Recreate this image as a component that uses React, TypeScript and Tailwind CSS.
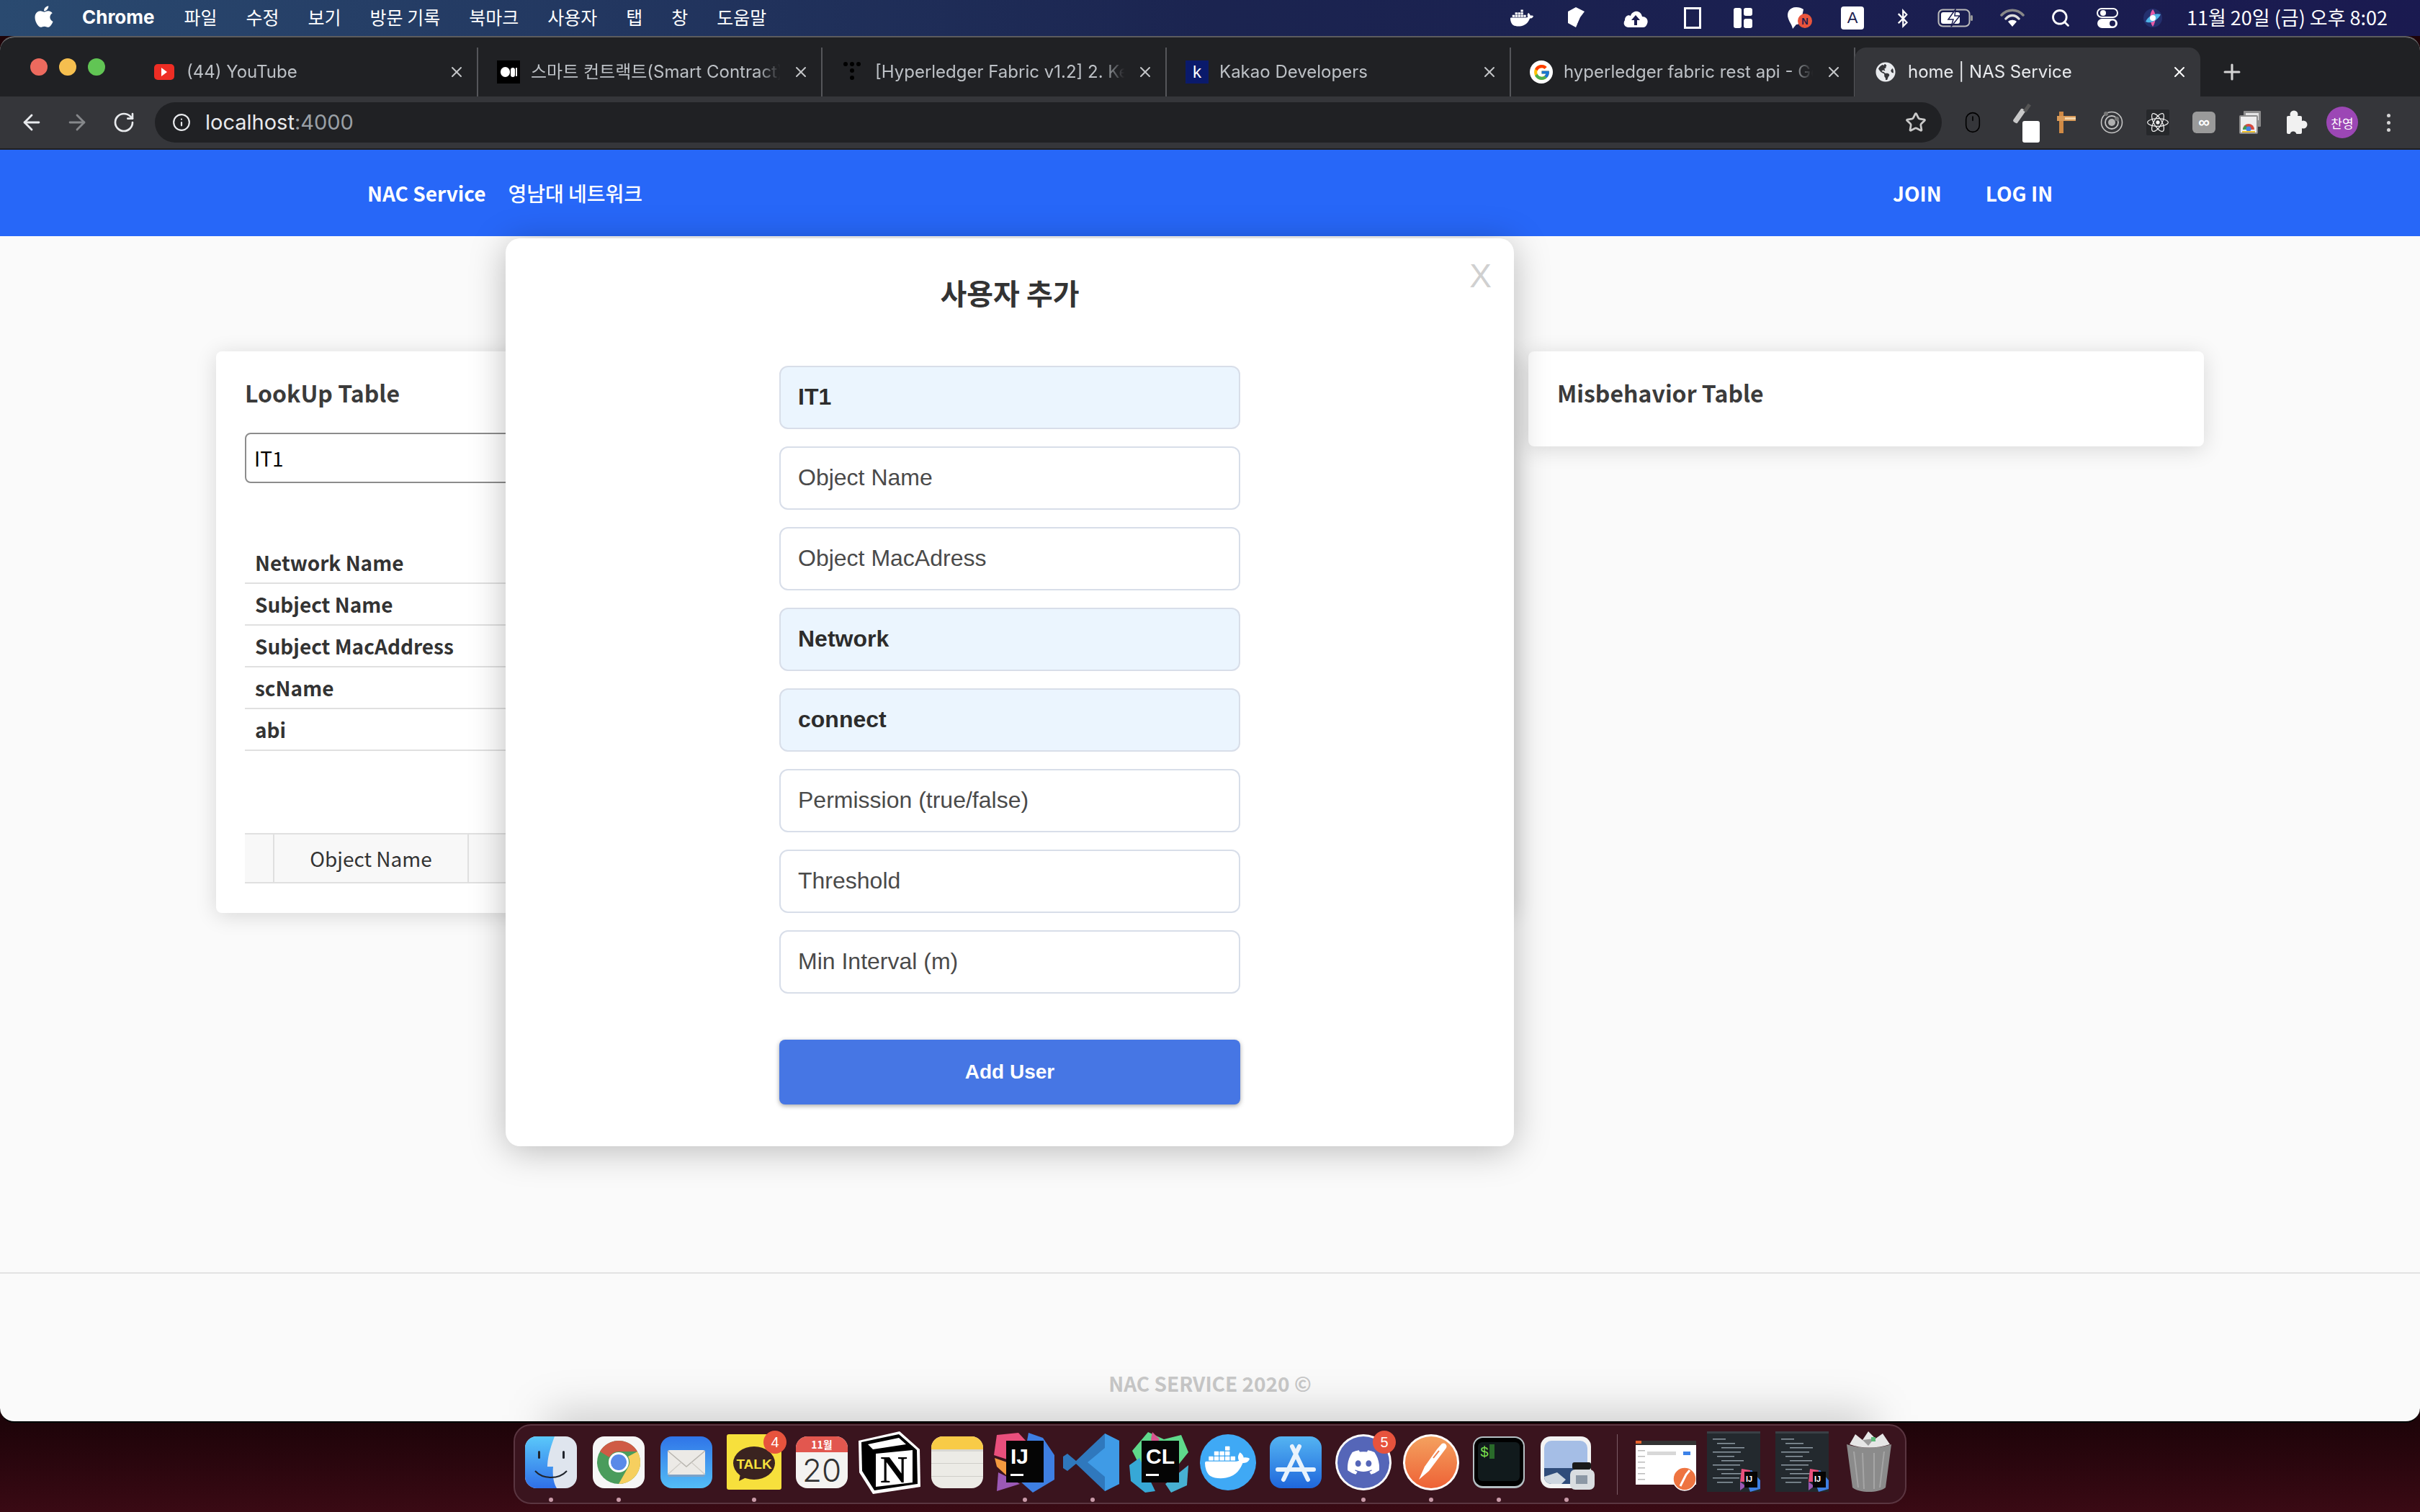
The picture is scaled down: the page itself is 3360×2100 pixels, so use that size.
import { ReactNode } from "react";
import { ArrowLeft, ArrowRight, Info, Mouse, Plus, RotateCw, Search, Star, X } from "lucide-react";
import { FaApple, FaBluetoothB, FaDiscord, FaGlobeAmericas, FaReact } from "react-icons/fa";
import { FcGoogle } from "react-icons/fc";
import { SiDocker } from "react-icons/si";

const menuItems = ["파일", "수정", "보기", "방문 기록", "북마크", "사용자", "탭", "창", "도움말"];

const tabs: { title: string; icon: ReactNode; active?: boolean }[] = [
  {
    title: "(44) YouTube",
    icon: (
      <span className="flex h-[22px] w-[28px] items-center justify-center rounded-[5px] bg-[#ee2d24]">
        <span className="h-0 w-0 border-y-[6px] border-l-[8px] border-y-transparent border-l-white" />
      </span>
    ),
  },
  {
    title: "스마트 컨트랙트(Smart Contract)란?",
    icon: (
      <span className="flex h-[32px] w-[32px] items-center justify-center gap-[1px] bg-black">
        <span className="h-[14px] w-[13px] rounded-full bg-white" />
        <span className="h-[13px] w-[6px] rounded-full bg-white" />
        <span className="h-[12px] w-[2px] rounded-full bg-white" />
      </span>
    ),
  },
  {
    title: "[Hyperledger Fabric v1.2] 2. Key Concepts",
    icon: (
      <svg width="32" height="32" viewBox="0 0 32 32" fill="#000">
        <circle cx="6" cy="5" r="3" />
        <circle cx="15" cy="5" r="3" />
        <circle cx="24" cy="5" r="3" />
        <circle cx="15" cy="14" r="3" />
        <circle cx="15" cy="24" r="3" />
      </svg>
    ),
  },
  {
    title: "Kakao Developers",
    icon: (
      <span className="flex h-[32px] w-[32px] items-center justify-center bg-[#0a1a6b] font-['Liberation_Sans',sans-serif] text-[24px] leading-none text-white">
        k
      </span>
    ),
  },
  {
    title: "hyperledger fabric rest api - Google 검색",
    icon: (
      <span className="flex h-[32px] w-[32px] items-center justify-center rounded-full bg-white">
        <FcGoogle size={25} />
      </span>
    ),
  },
  {
    title: "home | NAS Service",
    active: true,
    icon: <FaGlobeAmericas size={28} className="text-[#e8eaed]" />,
  },
];

const lookupRows = ["Network Name", "Subject Name", "Subject MacAddress", "scName", "abi"];

const formFields = [
  { value: "IT1" },
  { placeholder: "Object Name" },
  { placeholder: "Object MacAdress" },
  { value: "Network" },
  { value: "connect" },
  { placeholder: "Permission (true/false)" },
  { placeholder: "Threshold" },
  { placeholder: "Min Interval (m)" },
];

const MenuStatusIcons = () => (
  <div className="absolute inset-y-0 left-[2095px] flex items-center text-white">
    <span className="flex w-[35px] justify-center">
      <SiDocker size={32} />
    </span>
    <svg className="ml-[44px]" width="28" height="30" viewBox="0 0 28 30" fill="#fff">
      <path d="M14 0 L26 6 L20 14 L14 28 L3 22 V6 Z" />
      <path d="M22 14 L17 24" stroke="#1b1d50" strokeWidth="2" />
    </svg>
    <svg className="ml-[51px]" width="36" height="30" viewBox="0 0 36 30" fill="#fff">
      <path d="M9 28 C2 28 0 22 3 18 C3 12 8 10 11 12 C13 4 25 3 27 13 C33 13 36 18 34 23 C33 26 31 28 28 28 Z" />
      <path d="M18 11 L12 18 H16 V25 H20 V18 H24 Z" fill="#1b1d50" />
    </svg>
    <span className="ml-[49px] h-[30px] w-[24px] border-[3px] border-white" />
    <svg className="ml-[45px]" width="26" height="28" viewBox="0 0 26 28" fill="#fff">
      <rect x="0" y="0" width="11" height="28" rx="3" />
      <rect x="14" y="0" width="12" height="11" rx="3" />
      <rect x="14" y="15" width="12" height="13" rx="3" />
    </svg>
    <svg className="ml-[47px]" width="38" height="34" viewBox="0 0 38 34">
      <path d="M14 2 C4 2 0 10 3 18 C5 24 8 26 9 32 L14 26 C17 26 20 24 21 20 L24 5 C21 3 18 2 14 2 Z" fill="#fff" />
      <circle cx="26" cy="21" r="10" fill="#e9553c" />
      <text x="26" y="26" textAnchor="middle" fontSize="13" fontWeight="700" fill="#1b1d50" fontFamily="Liberation Sans, sans-serif">
        N
      </text>
    </svg>
    <span className="ml-[38px] flex h-[32px] w-[32px] items-center justify-center rounded-[4px] bg-white font-['Liberation_Sans',sans-serif] text-[22px] leading-none text-[#1b1d50]">
      A
    </span>
    <span className="ml-[44px] flex w-[20px] justify-center">
      <FaBluetoothB size={27} />
    </span>
    <svg className="ml-[38px]" width="50" height="26" viewBox="0 0 50 26" fill="none">
      <rect x="1.5" y="1.5" width="43" height="23" rx="6" stroke="#bbb" strokeWidth="2" />
      <rect x="5" y="5" width="26" height="16" rx="3" fill="#fff" />
      <rect x="46" y="9" width="3" height="8" rx="1.5" fill="#999" />
      <path d="M25 1 L15 15 H22 L19 25 L31 10 H24 Z" fill="#fff" stroke="#1b1d50" strokeWidth="1.5" />
    </svg>
    <svg className="ml-[37px]" width="34" height="26" viewBox="0 0 34 26" fill="none" strokeLinecap="round">
      <path d="M2 9 C10 0 24 0 32 9" stroke="#888" strokeWidth="3.5" />
      <path d="M8 14 C13 8 21 8 26 14" stroke="#ddd" strokeWidth="3.5" />
      <path d="M17 25 L11 18 C14 15 20 15 23 18 Z" fill="#fff" />
    </svg>
    <Search size={28} strokeWidth={2.4} className="ml-[36px]" />
    <svg className="ml-[36px]" width="30" height="28" viewBox="0 0 30 28">
      <rect x="1" y="1" width="28" height="12" rx="6" fill="none" stroke="#fff" strokeWidth="2" />
      <circle cx="9" cy="7" r="4" fill="#fff" />
      <rect x="1" y="15" width="28" height="13" rx="6.5" fill="#fff" />
      <circle cx="22" cy="21.5" r="4" fill="#1b1d50" />
    </svg>
    <svg className="ml-[35px]" width="26" height="26" viewBox="0 0 26 26">
      <circle cx="13" cy="13" r="13" fill="#24306e" />
      <path d="M13 1 C18 6 18 18 13 25 C8 18 8 6 13 1Z" fill="#e85aa6" />
      <path d="M3 18 C8 8 18 6 24 8 C20 16 10 22 3 18Z" fill="#4fb4e8" />
      <circle cx="13" cy="13" r="4" fill="#fff" />
    </svg>
  </div>
);

const ToolbarIcons = () => (
  <div className="ml-[27px] flex items-center">
    <Mouse size={32} strokeWidth={1.2} className="text-black" />
    <span className="relative ml-[33px] h-[48px] w-[46px]">
      <span className="absolute left-[12px] top-[4px] h-[22px] w-[7px] rotate-[35deg] rounded-[2px] bg-[#c8c8c8]" />
      <span className="absolute left-[24px] top-[-2px] h-[12px] w-[5px] rotate-[35deg] bg-[#555]" />
      <span className="absolute bottom-[-4px] right-[2px] h-[30px] w-[24px] rounded-[3px] bg-white" />
    </span>
    <svg className="ml-[22px]" width="28" height="30" viewBox="0 0 28 30">
      <rect x="3" y="0" width="6" height="30" fill="#d08a45" />
      <rect x="0" y="6" width="26" height="7" fill="#d89a58" />
      <rect x="11" y="8" width="15" height="3" fill="#f4d4a8" />
    </svg>
    <svg className="ml-[32px]" width="32" height="32" viewBox="0 0 32 32" fill="none" stroke="#c4c4c4">
      <circle cx="16" cy="16" r="14.5" strokeWidth="1.6" />
      <circle cx="16" cy="16" r="9" strokeWidth="1.8" />
      <circle cx="16" cy="16" r="5" fill="#b0b0b0" stroke="none" />
      <circle cx="8" cy="4" r="3" fill="#777" stroke="none" />
      <circle cx="23" cy="11" r="3" fill="#777" stroke="none" />
    </svg>
    <span className="ml-[32px] flex h-[36px] w-[32px] items-center justify-center rounded-[2px] bg-[#26282b]">
      <FaReact size={30} className="text-[#efefef]" />
    </span>
    <span className="ml-[32px] flex h-[30px] w-[32px] items-center justify-center rounded-[6px] bg-[#9a9a9a] font-['Liberation_Sans',sans-serif] text-[22px] font-bold leading-none text-white">
      ∞
    </span>
    <svg className="ml-[33px]" width="30" height="32" viewBox="0 0 30 32">
      <rect x="6" y="0" width="24" height="22" rx="1" fill="#8d8d8d" />
      <rect x="9" y="3" width="18" height="10" fill="#e5e5e5" />
      <rect x="0" y="6" width="26" height="26" rx="2" fill="#8d8d8d" />
      <rect x="2" y="8" width="22" height="22" fill="#eee" />
      <path d="M5 26 A8 8 0 0 1 21 26 Z" fill="#d64a3e" />
      <path d="M5 26 A8 8 0 0 1 9 20 L13 26 Z" fill="#3a9d54" />
      <circle cx="13" cy="25" r="3.5" fill="#3f83e8" />
      <rect x="4" y="28" width="18" height="2" fill="#f2c230" />
    </svg>
    <svg className="ml-[35px]" width="30" height="34" viewBox="0 0 30 34" fill="#f1f1f1">
      <rect x="1" y="8" width="21" height="25" rx="2" />
      <circle cx="11" cy="6" r="5.5" />
      <circle cx="24" cy="20" r="5.5" />
      <circle cx="10" cy="34" r="4.5" fill="#35363a" />
    </svg>
    <span className="ml-[26px] flex h-[44px] w-[44px] items-center justify-center rounded-full bg-[#9c47b5] font-['Noto_Sans_CJK_KR',sans-serif] text-[17px] leading-none text-white">
      찬영
    </span>
    <span className="ml-[40px] flex flex-col gap-[5px]">
      <span className="h-[5px] w-[5px] rounded-full bg-[#d5d5d5]" />
      <span className="h-[5px] w-[5px] rounded-full bg-[#d5d5d5]" />
      <span className="h-[5px] w-[5px] rounded-full bg-[#d5d5d5]" />
    </span>
  </div>
);

// dock icons are all drawn on a 94x92 cell, the plain square ones sit at 11,10 72x72
const Cell = ({ children }: { children: ReactNode }) => (
  <svg width="94" height="92" viewBox="0 0 94 92">
    {children}
  </svg>
);

const Badge = ({ n }: { n: string }) => (
  <>
    <circle cx="76" cy="18" r="16" fill="#e7533d" />
    <text x="76" y="25" textAnchor="middle" fontSize="20" fill="#fff" fontFamily="Liberation Sans, sans-serif">
      {n}
    </text>
  </>
);

const FinderIcon = () => (
  <Cell>
    <defs>
      <linearGradient id="finderBg" x1="0" y1="0" x2="0" y2="1">
        <stop offset="0" stopColor="#5ac8fa" />
        <stop offset="1" stopColor="#2f6fe8" />
      </linearGradient>
    </defs>
    <rect x="11" y="10" width="72" height="72" rx="16" fill="#dfe5ee" />
    <path d="M27 10 H52 C46 26 42 40 42 52 H50 C49 62 50 74 55 82 H27 A16 16 0 0 1 11 66 V26 A16 16 0 0 1 27 10 Z" fill="url(#finderBg)" />
    <rect x="29" y="30" width="3" height="11" rx="1.5" fill="#20242c" />
    <rect x="63" y="30" width="3" height="11" rx="1.5" fill="#20242c" />
    <path d="M25 58 C36 70 58 70 69 58" fill="none" stroke="#20242c" strokeWidth="2" />
  </Cell>
);

const ChromeIcon = () => (
  <Cell>
    <rect x="11" y="10" width="72" height="72" rx="16" fill="#f6f6f6" />
    <circle cx="47" cy="46" r="30" fill="#4a9c5c" />
    <path d="M21 31 A30 30 0 0 1 73 31 H47 A15 15 0 0 0 34 39 Z" fill="#cf5b45" />
    <path d="M73 31 A30 30 0 0 1 47 76 L60 53 A15 15 0 0 0 60 38 Z" fill="#f6cf5f" />
    <circle cx="47" cy="46" r="14" fill="#fff" />
    <circle cx="47" cy="46" r="11" fill="#5a8ae8" />
  </Cell>
);

const MailIcon = () => (
  <Cell>
    <defs>
      <linearGradient id="mailBg" x1="0" y1="0" x2="0" y2="1">
        <stop offset="0" stopColor="#2f74e8" />
        <stop offset="1" stopColor="#54bdf6" />
      </linearGradient>
    </defs>
    <rect x="11" y="10" width="72" height="72" rx="16" fill="url(#mailBg)" />
    <rect x="21" y="29" width="52" height="34" rx="3" fill="#eceae6" />
    <path d="M21 30 L47 52 L73 30" fill="none" stroke="#b9b6b0" strokeWidth="1.5" />
    <path d="M21 63 L40 46 M73 63 L54 46" stroke="#cfccc6" strokeWidth="1.2" />
    <rect x="22" y="63" width="50" height="3" fill="#7ea2c6" />
  </Cell>
);

const KakaoIcon = () => (
  <Cell>
    <rect x="9" y="7" width="76" height="77" rx="3" fill="#f7e03c" />
    <ellipse cx="47" cy="47" rx="29" ry="23" fill="#3a2320" />
    <path d="M28 62 L26 72 L38 66 Z" fill="#3a2320" />
    <text x="47" y="55" textAnchor="middle" fontSize="19" fontWeight="700" fill="#f7e03c" fontFamily="Liberation Sans, sans-serif">
      TALK
    </text>
    <Badge n="4" />
  </Cell>
);

const CalendarIcon = () => (
  <Cell>
    <rect x="11" y="10" width="72" height="72" rx="16" fill="#f4f3f1" />
    <path d="M27 10 H67 A16 16 0 0 1 83 26 V32 H11 V26 A16 16 0 0 1 27 10 Z" fill="#e2574f" />
    <text x="47" y="27" textAnchor="middle" fontSize="14" fontWeight="700" fill="#fff" fontFamily="Noto Sans CJK KR, sans-serif">
      11월
    </text>
    <text x="47" y="73" textAnchor="middle" fontSize="44" fill="#333" fontFamily="Inter, sans-serif" fontWeight="300">
      20
    </text>
  </Cell>
);

const NotionIcon = () => (
  <Cell>
    <path d="M4 16 L61 3 L89 28 L90 80 L24 90 L5 60 Z" fill="#fff" />
    <path d="M8 18 L60 7 L85 29 L86 76 L26 85 L9 58 Z" fill="#000" />
    <path d="M17 21 L60 12 L70 21 L24 28 Z" fill="#fff" />
    <path d="M28 34 L79 29 V74 L28 80 Z" fill="#fff" />
    <text x="53" y="74" textAnchor="middle" fontSize="52" fontWeight="700" fill="#000" fontFamily="Liberation Serif, serif">
      N
    </text>
  </Cell>
);

const NotesIcon = () => (
  <Cell>
    <defs>
      <clipPath id="notesClip">
        <rect x="11" y="10" width="72" height="72" rx="16" />
      </clipPath>
    </defs>
    <g clipPath="url(#notesClip)">
      <rect x="11" y="10" width="72" height="72" fill="#ecebe6" />
      <rect x="11" y="10" width="72" height="18" fill="#f8cb47" />
      <rect x="11" y="28" width="72" height="3" fill="#d9d8d3" />
      <rect x="11" y="47" width="72" height="1" fill="#cfcec9" />
      <rect x="11" y="65" width="72" height="1" fill="#cfcec9" />
    </g>
  </Cell>
);

const JetBrainsIcon = ({ label, variant }: { label: string; variant: "ij" | "cl" }) => (
  <Cell>
    {variant === "ij" ? (
      <>
        <path d="M8 8 L38 5 L50 18 L47 50 L4 36 Z" fill="#e94f7c" />
        <path d="M52 5 L72 12 L88 36 L88 70 L58 88 L40 72 Z" fill="#3e7fe3" />
        <path d="M5 40 L28 48 L30 72 L8 52 Z" fill="#f39a3f" />
        <path d="M10 60 L30 70 L40 76 L8 86 Z" fill="#9b59b6" />
      </>
    ) : (
      <>
        <path d="M30 4 L52 14 L76 8 L86 32 L70 52 L18 50 L8 30 Z" fill="#5fd98b" />
        <path d="M36 4 L46 14 L38 24 L34 14 Z" fill="#d9558f" />
        <path d="M4 50 L18 40 L40 86 L26 88 L6 72 Z" fill="#37a8d6" />
        <path d="M54 76 L86 50 L84 78 L62 88 Z" fill="#47b0d2" />
      </>
    )}
    <rect x="21" y="16" width="52" height="58" fill="#050505" />
    <text x="27" y="48" fontSize="30" fontWeight="700" fill="#fff" fontFamily="Liberation Sans, sans-serif">
      {label}
    </text>
    <rect x="27" y="62" width="18" height="3" fill="#fff" />
  </Cell>
);

const VscodeIcon = () => (
  <Cell>
    <path d="M64 6 L84 16 V76 L64 86 L24 48 L12 58 L6 54 V38 L12 34 L24 44 Z" fill="#2f78bd" />
    <path d="M64 6 L84 16 V76 L64 86 Z M64 26 L40 46 L64 66 Z" fill="#3f9be6" fillRule="evenodd" />
  </Cell>
);

const DockerIcon = () => (
  <Cell>
    <circle cx="47" cy="46" r="39" fill="#3fa9f5" />
    <foreignObject x="15" y="15" width="64" height="62">
      <SiDocker size={62} color="#fff" />
    </foreignObject>
  </Cell>
);

const AppStoreIcon = () => (
  <Cell>
    <defs>
      <linearGradient id="appBg" x1="0" y1="0" x2="0" y2="1">
        <stop offset="0" stopColor="#54b4f2" />
        <stop offset="1" stopColor="#1f67dc" />
      </linearGradient>
    </defs>
    <rect x="11" y="10" width="72" height="72" rx="16" fill="url(#appBg)" />
    <path d="M52 24 L30 70 M42 24 L64 70 M22 56 H72" stroke="#e9f3fc" strokeWidth="6" strokeLinecap="round" fill="none" />
  </Cell>
);

const DiscordIcon = () => (
  <Cell>
    <circle cx="47" cy="46" r="39" fill="#fff" />
    <circle cx="47" cy="46" r="36" fill="#5566b8" />
    <foreignObject x="23" y="22" width="48" height="48">
      <FaDiscord size={48} color="#fff" />
    </foreignObject>
    <Badge n="5" />
  </Cell>
);

const PostmanIcon = () => (
  <Cell>
    <defs>
      <linearGradient id="postBg" x1="0" y1="0" x2="0" y2="1">
        <stop offset="0" stopColor="#f4a15f" />
        <stop offset="1" stopColor="#ee6236" />
      </linearGradient>
    </defs>
    <circle cx="47" cy="46" r="39" fill="#fff" />
    <circle cx="47" cy="46" r="36" fill="url(#postBg)" />
    <path d="M30 70 L38 52 L55 28 L62 20 C66 18 70 22 68 26 L62 34 L44 58 Z" fill="#fff" />
    <path d="M50 40 L58 30" stroke="#ef7d4a" strokeWidth="2" />
  </Cell>
);

const TerminalIcon = () => (
  <Cell>
    <rect x="11" y="10" width="72" height="72" rx="14" fill="#b5c0c4" />
    <rect x="13" y="12" width="68" height="67" rx="12" fill="#000" />
    <rect x="18" y="18" width="58" height="54" rx="6" fill="#111a1c" />
    <text x="21" y="38" fontSize="20" fill="#7ce04e" fontFamily="Liberation Mono, monospace">
      $
    </text>
    <rect x="34" y="21" width="7" height="20" fill="#2a6b2a" />
  </Cell>
);

const PreviewIcon = () => (
  <Cell>
    <rect x="11" y="10" width="70" height="72" rx="14" fill="#f3f3f3" />
    <rect x="16" y="16" width="60" height="60" rx="10" fill="#a5bee6" />
    <path d="M16 54 H76 V66 A10 10 0 0 1 66 76 H26 A10 10 0 0 1 16 66 Z" fill="#2f4c7a" />
    <path d="M16 66 L34 60 L46 70 L40 76 H26 A10 10 0 0 1 16 66 Z" fill="#cdd6df" />
    <rect x="55" y="46" width="26" height="10" rx="3" fill="#1a1a1a" />
    <rect x="52" y="56" width="34" height="28" rx="7" fill="#d9dde0" />
    <rect x="60" y="64" width="16" height="12" fill="#8c98a5" />
  </Cell>
);

const CodeThumb = () => (
  <svg width="74" height="84" viewBox="0 0 74 84">
    <rect width="74" height="84" fill="#23292e" />
    <rect width="74" height="3" fill="#3a4046" />
    {[10, 16, 22, 28, 34, 40, 46, 52, 58, 64, 70].map((y, i) => (
      <rect key={y} x={8 + (i % 3) * 6} y={y} width={18 + ((i * 7) % 22)} height="1.5" fill="#8d9aa3" />
    ))}
    <path d="M50 56 L62 54 L74 68 V80 L60 84 Z" fill="#3e7fe3" />
    <path d="M48 52 L60 54 L60 70 L46 70 Z" fill="#e94f7c" />
    <path d="M46 70 L54 76 L46 82 Z" fill="#9b59b6" />
    <rect x="52" y="56" width="18" height="22" fill="#050505" />
    <text x="54" y="70" fontSize="11" fontWeight="700" fill="#fff" fontFamily="Liberation Sans, sans-serif">
      IJ
    </text>
  </svg>
);

const BrowserThumb = () => (
  <svg width="86" height="84" viewBox="0 0 86 84">
    <rect x="2" y="13" width="84" height="6" fill="#333" />
    <rect x="2" y="19" width="84" height="55" fill="#fff" />
    <rect x="2" y="13" width="8" height="4" fill="#e8632c" />
    <rect x="18" y="28" width="40" height="5" fill="#d8d8d8" />
    <rect x="68" y="28" width="10" height="5" fill="#3c82e8" />
    {[26, 34, 42, 50, 58, 66].map((y) => (
      <rect key={y} x="5" y={y} width="10" height="1.5" fill="#bbb" />
    ))}
    <circle cx="70" cy="66" r="16" fill="#ee7440" stroke="#fff" strokeWidth="1.5" />
    <path d="M64 76 L72 60 L77 54" stroke="#fff" strokeWidth="3" fill="none" />
  </svg>
);

const TrashIcon = () => (
  <svg width="66" height="84" viewBox="0 0 66 84">
    <path d="M2 18 C20 24 46 24 64 18 L56 78 C46 86 20 86 10 78 Z" fill="#8b8b8b" />
    <path d="M12 28 L18 78 M24 30 L26 80 M40 30 L40 80 M54 28 L48 78" stroke="#a5a5a5" strokeWidth="2" />
    <path d="M6 18 L14 4 L24 12 L32 0 L42 10 L52 3 L62 18 C44 24 22 24 6 18 Z" fill="#e6e6e6" />
    <path d="M24 12 L32 20 L40 10 Z" fill="#9c9c9c" />
    <rect x="36" y="8" width="6" height="6" fill="#5cb878" />
  </svg>
);

const dockApps: { icon: ReactNode; running?: boolean }[] = [
  { icon: <FinderIcon />, running: true },
  { icon: <ChromeIcon />, running: true },
  { icon: <MailIcon /> },
  { icon: <KakaoIcon />, running: true },
  { icon: <CalendarIcon /> },
  { icon: <NotionIcon /> },
  { icon: <NotesIcon /> },
  { icon: <JetBrainsIcon label="IJ" variant="ij" />, running: true },
  { icon: <VscodeIcon />, running: true },
  { icon: <JetBrainsIcon label="CL" variant="cl" /> },
  { icon: <DockerIcon /> },
  { icon: <AppStoreIcon /> },
  { icon: <DiscordIcon />, running: true },
  { icon: <PostmanIcon />, running: true },
  { icon: <TerminalIcon />, running: true },
  { icon: <PreviewIcon />, running: true },
];

const Dock = () => (
  <div className="flex h-[111px] w-[1934px] rounded-[24px] border-2 border-[#5a3540] bg-[#3a141e] pl-[3px] pt-[5px]">
    {dockApps.map(({ icon, running }, i) => (
      <div key={i} className="flex w-[94px] flex-col items-center">
        {icon}
        {running && <span className="mt-[3px] h-[6px] w-[6px] rounded-full bg-[#c99aa8]" />}
      </div>
    ))}
    <div className="ml-[23px] mt-[7px] h-[84px] w-[1px] bg-[#7a5a64]" />
    <div className="ml-[23px] mt-[3px] flex items-start">
      <BrowserThumb />
      <div className="ml-[15px]">
        <CodeThumb />
      </div>
      <div className="ml-[21px]">
        <CodeThumb />
      </div>
      <div className="ml-[23px]">
        <TrashIcon />
      </div>
    </div>
  </div>
);

const Tab = ({ title, icon, active }: { title: string; icon: ReactNode; active?: boolean }) => (
  <div className="relative flex h-[68px] w-[478px] items-center pl-[26px] pr-[16px]">
    {active && <div className="absolute inset-y-0 left-[-1px] right-[-1px] rounded-t-[16px] bg-[#35363a]" />}
    <span className="relative flex w-[32px] shrink-0 items-center justify-center">{icon}</span>
    <span
      className={`relative ml-[15px] w-[350px] overflow-hidden whitespace-nowrap text-[24px] [mask-image:linear-gradient(to_right,black_90%,transparent_99%)] ${
        active ? "text-[#e8eaed]" : "text-[#bdc1c6]"
      }`}
    >
      {title}
    </span>
    <X size={24} strokeWidth={2} className={`relative ml-auto ${active ? "text-white" : "text-[#c4c6c9]"}`} />
  </div>
);

export default function App() {
  return (
    <div className="flex h-[2100px] w-[3360px] flex-col overflow-hidden bg-[#1e0409] font-['Inter','Noto_Sans_CJK_KR',sans-serif]">
      {/* mac menu bar */}
      <div className="relative flex h-[50px] shrink-0 items-center bg-gradient-to-r from-[#2a4a70] via-[#1b2450] to-[#1a1a50] pb-[4px] pl-[44px] text-[24px] text-white">
        <FaApple size={34} />
        <span className="ml-[36px] text-[26px] font-bold">Chrome</span>
        <div className="ml-[41px] flex gap-[40px] font-['Noto_Sans_CJK_KR',sans-serif] text-[25px] leading-none">
          {menuItems.map((item) => (
            <span key={item} className="whitespace-nowrap">
              {item}
            </span>
          ))}
        </div>
        <MenuStatusIcons />
        <span className="absolute left-[3036px] whitespace-nowrap font-['Noto_Sans_CJK_KR',sans-serif] text-[27px] leading-none">
          11월 20일 (금) 오후 8:02
        </span>
      </div>

      {/* browser window */}
      <div className="flex h-[1926px] shrink-0 flex-col overflow-hidden rounded-[20px] border-y-2 border-b-black border-t-[#5c5c5e] bg-[#fafafa]">
        <div className="flex h-[82px] shrink-0 items-end bg-[#202124] pl-[42px]">
          <div className="mb-[29px] flex gap-[16px]">
            <span className="h-[24px] w-[24px] rounded-full bg-[#ed6a5e]" />
            <span className="h-[24px] w-[24px] rounded-full bg-[#f5bf4f]" />
            <span className="h-[24px] w-[24px] rounded-full bg-[#61c554]" />
          </div>
          <div className="ml-[40px] flex divide-x-2 divide-[#55565a]">
            {tabs.map((tab) => (
              <Tab key={tab.title} {...tab} />
            ))}
          </div>
          <Plus size={34} strokeWidth={2.2} className="mb-[17px] ml-[28px] text-[#d4d4d4]" />
        </div>

        <div className="flex h-[74px] shrink-0 items-center border-b-2 border-[#1f1f21] bg-[#35363a]">
          <ArrowLeft size={34} strokeWidth={2} className="ml-[27px] text-[#e8eaed]" />
          <ArrowRight size={34} strokeWidth={2} className="ml-[29px] text-[#86888b]" />
          <RotateCw size={32} strokeWidth={2} className="ml-[32px] text-[#e8eaed]" />
          <div className="ml-[27px] flex h-[56px] w-[2481px] items-center rounded-full bg-[#202124] pl-[24px]">
            <Info size={26} strokeWidth={2} className="text-[#e8eaed]" />
            <span className="ml-[20px] text-[29px] text-[#e8eaed]">
              localhost<span className="text-[#9aa0a6]">:4000</span>
            </span>
            <Star size={30} strokeWidth={2.2} className="ml-auto mr-[21px] text-[#c9c9c9]" />
          </div>
          <ToolbarIcons />
        </div>

        {/* site */}
        <div className="relative flex flex-1 flex-col font-['Noto_Sans_CJK_KR',sans-serif]">
          <header className="flex h-[120px] shrink-0 items-center bg-[#2767f8] pl-[510px] text-[28px] leading-none text-white">
            <span className="font-bold">NAC Service</span>
            <span className="ml-[31px] font-medium">영남대 네트워크</span>
            <span className="ml-[1736px] font-bold">JOIN</span>
            <span className="ml-[61px] font-bold">LOG IN</span>
          </header>

          <div className="flex h-[1439px] shrink-0 items-start gap-[20px] pl-[300px] pt-[160px] text-[#333]">
            <section className="w-[1802px] rounded-[8px] bg-white px-[40px] pb-[41px] pt-[39px] shadow-[0_4px_30px_rgba(0,0,0,0.14)]">
              <h2 className="text-[32px] font-bold leading-[36px] text-[#3b3b3b]">LookUp Table</h2>
              <input
                readOnly
                value="IT1"
                className="mt-[38px] h-[70px] w-full rounded-[8px] border-2 border-[#8c8c8c] px-[11px] text-[28px] text-black outline-none"
              />
              <div className="mt-[82px]">
                {lookupRows.map((row) => (
                  <div key={row} className="flex h-[58px] items-center border-b-2 border-[#e0e0e0] pl-[14px] text-[28px] font-bold leading-none">
                    {row}
                  </div>
                ))}
              </div>
              <div className="mt-[114px] flex h-[70px] border-y-2 border-[#e0e0e0] bg-[#f8f8f8] text-[28px] leading-none">
                <div className="w-[41px] border-r-2 border-[#e0e0e0]" />
                <div className="flex w-[270px] items-center justify-center border-r-2 border-[#e0e0e0]">Object Name</div>
              </div>
            </section>
            <section className="h-[132px] w-[938px] rounded-[8px] bg-white px-[40px] pt-[39px] shadow-[0_4px_30px_rgba(0,0,0,0.14)]">
              <h2 className="text-[32px] font-bold leading-[36px] text-[#3b3b3b]">Misbehavior Table</h2>
            </section>
          </div>

          <footer className="relative flex h-[207px] items-start justify-center overflow-hidden border-t-2 border-[#e2e2e2] pt-[134px] text-[28px] font-bold leading-[36px] text-[#c8c8c8]">
            NAC SERVICE 2020 ©
            <div className="absolute bottom-[-50px] left-[760px] h-[60px] w-[1840px] bg-black/20 blur-[30px]" />
          </footer>

          {/* add user modal */}
          <div className="absolute left-[702px] top-[123px] flex h-[1261px] w-[1400px] flex-col items-center rounded-[20px] bg-white font-['Liberation_Sans','Noto_Sans_CJK_KR',sans-serif] shadow-[0_6px_50px_rgba(0,0,0,0.26)]">
            <span className="absolute right-[31px] top-[26px] text-[46px] leading-[52px] text-[#d0d0d0]">X</span>
            <h1 className="mt-[51px] font-['Noto_Sans_CJK_KR',sans-serif] text-[40px] font-bold leading-[48px] text-[#333]">사용자 추가</h1>
            <form className="mt-[78px] flex w-[640px] flex-col gap-[24px]">
              {formFields.map((field, i) => (
                <input
                  key={i}
                  readOnly
                  value={field.value}
                  placeholder={field.placeholder}
                  className={`h-[88px] w-full rounded-[12px] border-2 border-[#d8dee9] px-[24px] pb-[2px] text-[32px] outline-none placeholder:text-[#4a4a4a] ${
                    field.value ? "bg-[#ebf5fe] font-bold text-[#2c2c2c]" : "bg-white"
                  }`}
                />
              ))}
              <button
                type="button"
                className="mt-[40px] h-[90px] w-full rounded-[8px] bg-[#4676e4] text-[28px] font-bold text-white shadow-[0_2px_6px_rgba(0,0,0,0.35)]"
              >
                Add User
              </button>
            </form>
          </div>
        </div>
      </div>

      <div className="flex flex-1 justify-center bg-gradient-to-b from-[#1e0409] to-[#3a0a14] pt-[2px]">
        <Dock />
      </div>
    </div>
  );
}
